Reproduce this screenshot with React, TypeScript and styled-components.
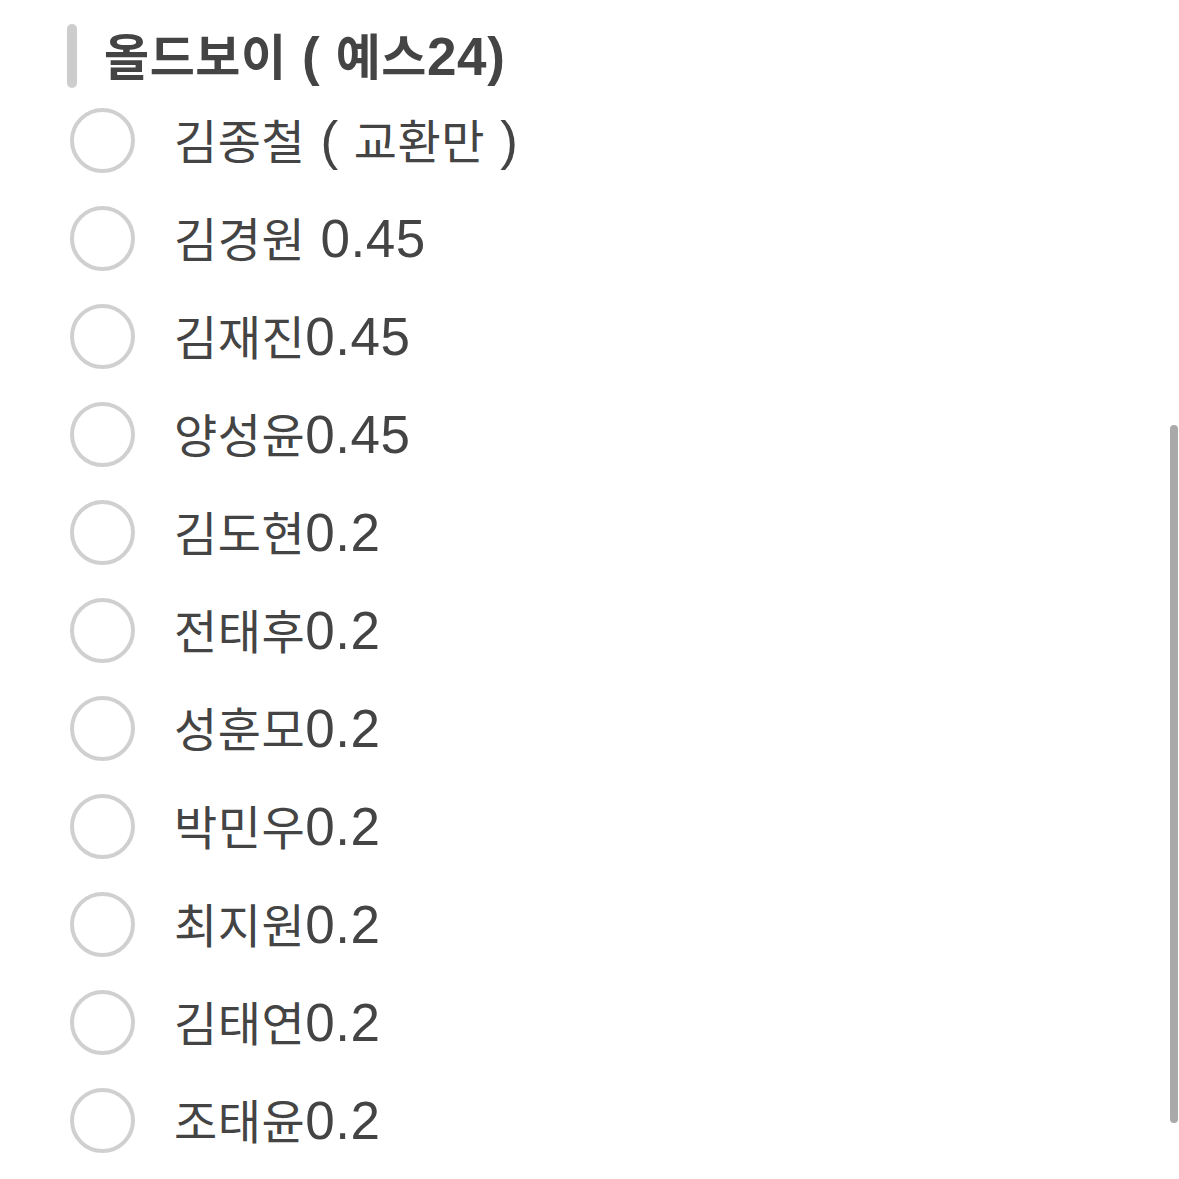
import React from "react";
import styled, { createGlobalStyle } from "styled-components";

const Global = createGlobalStyle`
  html, body { margin: 0; padding: 0; background: #fff; }
  body { font-family: "Liberation Sans", "Noto Sans CJK KR", sans-serif; }
`;

const Page = styled.div`
  position: relative;
  width: 1179px;
  height: 1179px;
  overflow: hidden;
  background: #fff;
  padding: 24px 0 0 67px;
  box-sizing: border-box;
`;

const Header = styled.div`
  display: flex;
  align-items: center;
  gap: 27px;
  height: 64px;
`;

const Accent = styled.div`
  width: 10px;
  height: 64px;
  border-radius: 5px;
  background: #cdcdcd;
`;

const Title = styled.h2`
  margin: 0;
  font-family: "Liberation Sans", "Noto Sans CJK KR", sans-serif;
  font-weight: 700;
  font-size: 53px;
  color: #444;
  line-height: 1;
  letter-spacing: 0.6px;
  white-space: pre;
`;

const Hangul = styled.span<{ $size: number }>`
  font-family: "Noto Sans CJK KR", sans-serif;
  font-size: ${(p) => p.$size}px;
`;

const List = styled.div`
  display: flex;
  flex-direction: column;
  margin-top: 3px;
  padding-left: 3px;
`;

const Row = styled.label`
  display: flex;
  align-items: center;
  height: 98px;
  gap: 39px;
`;

const Radio = styled.span`
  width: 65px;
  height: 65px;
  box-sizing: border-box;
  border-radius: 50%;
  border: 4px solid #d0d0d0;
  flex: none;
`;

const Label = styled.span`
  font-family: "Liberation Sans", "Noto Sans CJK KR", sans-serif;
  font-size: 53px;
  color: #444;
  line-height: 1;
  letter-spacing: 0.5px;
  white-space: pre;
`;

const Scrollbar = styled.div`
  position: absolute;
  right: 1px;
  top: 425px;
  width: 8px;
  height: 698px;
  border-radius: 4px;
  background: #a9a9a9;
`;

function Mixed({ text, size }: { text: string; size: number }) {
  const parts = text.split(/([\uAC00-\uD7A3]+)/).filter((p) => p.length > 0);
  return (
    <>
      {parts.map((p, i) =>
        /[\uAC00-\uD7A3]/.test(p) ? (
          <Hangul key={i} $size={size}>
            {p}
          </Hangul>
        ) : (
          <React.Fragment key={i}>{p}</React.Fragment>
        )
      )}
    </>
  );
}

const items = [
  "김종철 ( 교환만 )",
  "김경원 0.45",
  "김재진0.45",
  "양성윤0.45",
  "김도현0.2",
  "전태후0.2",
  "성훈모0.2",
  "박민우0.2",
  "최지원0.2",
  "김태연0.2",
  "조태윤0.2",
];

export default function App() {
  return (
    <Page>
      <Global />
      <Header>
        <Accent />
        <Title>
          <Mixed text="올드보이 ( 예스24)" size={49} />
        </Title>
      </Header>
      <List>
        {items.map((t) => (
          <Row key={t}>
            <Radio />
            <Label>
              <Mixed text={t} size={47} />
            </Label>
          </Row>
        ))}
      </List>
      <Scrollbar />
    </Page>
  );
}
